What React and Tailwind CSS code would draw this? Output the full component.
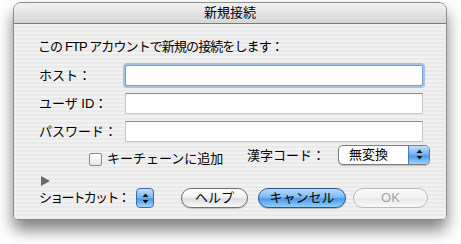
import React from "react";

const font = "font-['Liberation_Sans','Noto_Sans_CJK_JP',sans-serif]";

function UpDownArrows({ className }) {
  return (
    <svg width="7" height="11" viewBox="0 0 7 11" className={className}>
      <polygon points="3.5,0.5 6.5,4 0.5,4" fill="#111" />
      <polygon points="0.5,7 6.5,7 3.5,10.5" fill="#111" />
    </svg>
  );
}

function AquaButton({ children, variant, className }) {
  // aqua pill buttons: default (blue), normal, disabled
  if (variant === "default") {
    return (
      <div
        className={`flex h-[20px] items-center justify-center rounded-full border border-[#28549a] bg-[linear-gradient(#b7dcfb_0%,#7fbaf3_45%,#4b9ae9_55%,#8ed0fb_100%)] text-[13px] text-black shadow-[0_1px_1px_rgba(0,0,0,0.25)] ${className}`}
      >
        {children}
      </div>
    );
  }
  if (variant === "disabled") {
    return (
      <div
        className={`flex h-[20px] items-center justify-center rounded-full border border-[#b9b9b9] bg-[linear-gradient(#fbfbfb_0%,#f1f1f1_50%,#e9e9e9_55%,#f8f8f8_100%)] text-[13px] text-[#a3a3a3] ${className}`}
      >
        {children}
      </div>
    );
  }
  return (
    <div
      className={`flex h-[20px] items-center justify-center rounded-full border border-[#6f6f6f] bg-[linear-gradient(#ffffff_0%,#f2f2f2_45%,#dcdcdc_55%,#fbfbfb_100%)] text-[13px] text-black shadow-[0_1px_1px_rgba(0,0,0,0.2)] ${className}`}
    >
      {children}
    </div>
  );
}

export default function App() {
  return (
    <div className={`h-[244px] w-[461px] overflow-hidden bg-white pl-[13px] pt-[2px] ${font}`}>
      {/* Window */}
      <div className="flex h-[218px] w-[434px] flex-col overflow-hidden rounded-t-[8px] rounded-b-[5px] border border-[#8c8c8c] shadow-[0_10px_16px_rgba(0,0,0,0.5)]">
        {/* Title bar */}
        <div className="flex h-[21px] shrink-0 items-center justify-center border-b border-[#7b7b7b] bg-[linear-gradient(#f2f2f2,#d6d6d6)] text-[13px] text-black">
          新規接続
        </div>

        {/* Body */}
        <div className="flex flex-1 flex-col bg-[repeating-linear-gradient(#f1f1f1_0px,#f1f1f1_2px,#e9e9e9_2px,#e9e9e9_4px)] pl-[24px] text-[13px] text-black">
          <div className="mt-[15px] h-[16px] whitespace-nowrap leading-[16px] tracking-[-0.9px]">
            この FTP アカウントで新規の接続をします：
          </div>

          {/* Fields */}
          <div className="mt-[10px] flex flex-col gap-[7px]">
            <div className="flex h-[21px] items-center">
              <span className="w-[87px] pl-px">ホスト：</span>
              <div className="h-[21px] w-[298px] rounded-[2px] border border-[#7d9ec8] bg-white shadow-[0_0_0_2px_#a4c2e6]" />
            </div>
            <div className="flex h-[21px] items-center">
              <span className="w-[87px] pl-px">ユーザ ID：</span>
              <div className="h-[21px] w-[298px] border border-[#c4c4c4] border-t-[#8b8b8b] bg-white" />
            </div>
            <div className="flex h-[21px] items-center">
              <span className="w-[87px] pl-px">パスワード：</span>
              <div className="h-[21px] w-[298px] border border-[#c4c4c4] border-t-[#8b8b8b] bg-white" />
            </div>
          </div>

          {/* Keychain + kanji code */}
          <div className="mt-[2px] flex h-[20px] items-start">
            <div className="ml-[51px] mt-[8px] flex items-center">
              <div className="h-[13px] w-[13px] rounded-[2px] border border-[#8a8a8a] bg-[linear-gradient(#ffffff,#e6e6e6)]" />
              <span className="ml-[5px] whitespace-nowrap leading-[14px]">キーチェーンに追加</span>
            </div>
            <div className="ml-auto mr-[16px] flex items-center">
              <span className="mt-[2px] whitespace-nowrap">漢字コード：</span>
              <div className="ml-[13px] flex h-[20px] w-[92px] items-center overflow-hidden rounded-[5px] border border-[#7c7c7c] bg-white shadow-[0_1px_1px_rgba(0,0,0,0.2)]">
                <span className="flex-1 pl-[10px]">無変換</span>
                <div className="flex h-full w-[21px] items-center justify-center border-l border-[#4a76b8] bg-[linear-gradient(#bfe0fc,#6eaef0_50%,#4a97e8_55%,#9ad4fb)]">
                  <UpDownArrows />
                </div>
              </div>
            </div>
          </div>

          {/* Disclosure triangle */}
          <svg width="9" height="10" viewBox="0 0 9 10" className="ml-[3px] mt-[12px]">
            <polygon points="0,0 9,5 0,10" fill="#6a6a6a" />
          </svg>

          {/* Shortcut + buttons */}
          <div className="mt-[2px] flex h-[20px] items-center">
            <span className="w-[98px] whitespace-nowrap pl-px tracking-[-1.8px]">ショートカット：</span>
            <div className="flex h-[20px] w-[18px] items-center justify-center rounded-[4px] border border-[#3c6cb0] bg-[linear-gradient(#c4e3fd,#72b2f1_50%,#4a97e8_55%,#a2d8fc)]">
              <UpDownArrows />
            </div>
            <AquaButton className="ml-[27px] w-[67px]">ヘルプ</AquaButton>
            <AquaButton variant="default" className="ml-[10px] w-[88px]">
              キャンセル
            </AquaButton>
            <AquaButton variant="disabled" className="ml-[7px] w-[75px]">
              OK
            </AquaButton>
          </div>
        </div>
      </div>
    </div>
  );
}
